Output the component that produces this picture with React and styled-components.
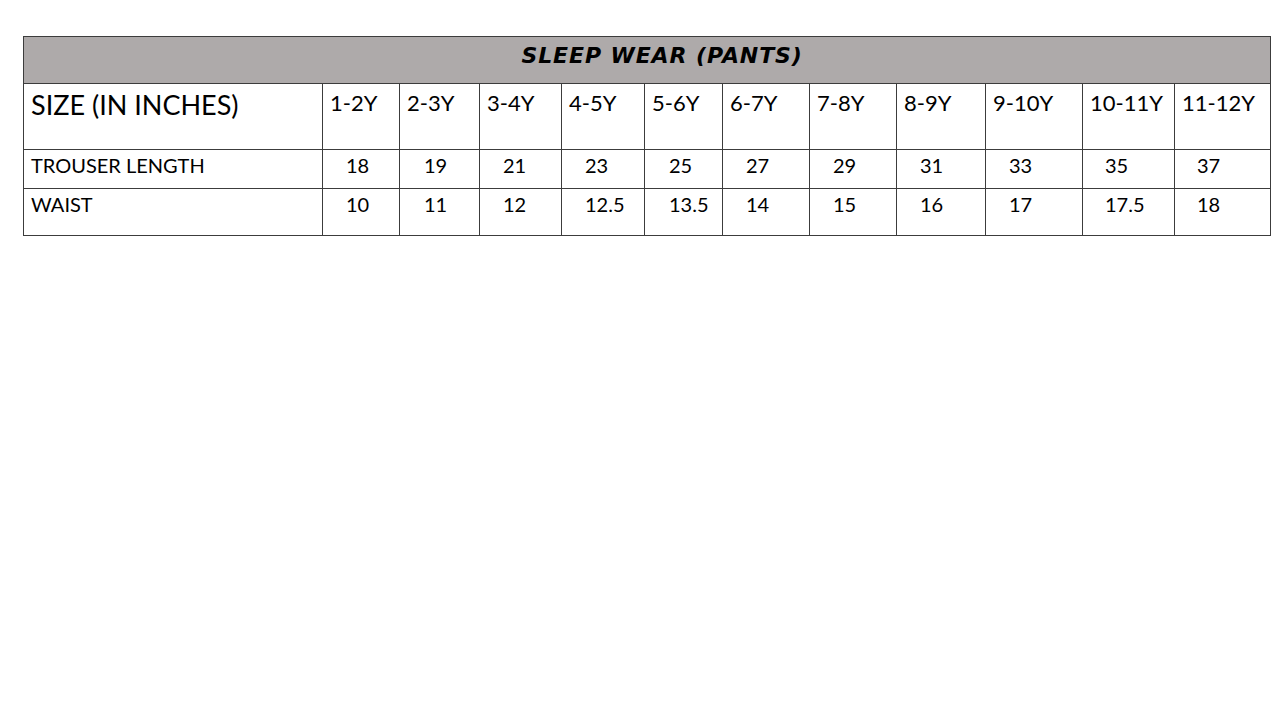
import React from "react";
import styled, { createGlobalStyle } from "styled-components";

const GlobalStyle = createGlobalStyle`
  html, body {
    margin: 0;
    padding: 0;
    background: #ffffff;
  }
  body {
    font-family: Lato, "Liberation Sans", sans-serif;
    color: #000000;
  }
`;

const Page = styled.div`
  width: 1280px;
  height: 720px;
  box-sizing: border-box;
  padding: 36px 0 0 23px;
`;

const Table = styled.table`
  width: 1248px;
  border-collapse: collapse;
  table-layout: fixed;
`;

const TitleCell = styled.th`
  height: 47px;
  padding: 6px 0 0 30px;
  background-color: #aeaaaa;
  border: 1px solid #3c3c3c;
  font-family: "DejaVu Sans", "Liberation Sans", sans-serif;
  font-size: 22px;
  font-weight: bold;
  font-style: italic;
  letter-spacing: 0.9px;
  text-align: center;
  vertical-align: top;
  box-sizing: border-box;
`;

const Row = styled.tr`
  height: ${(p) => p.$h}px;
`;

const LabelCell = styled.td`
  padding: ${(p) => (p.$big ? "4px 0 0 7px" : "3px 0 0 7px")};
  border: 1px solid #3c3c3c;
  font-size: ${(p) => (p.$big ? "27px" : "20px")};
  vertical-align: top;
  text-align: left;
  white-space: nowrap;
`;

const SizeCell = styled.td`
  padding: 5px 0 0 7px;
  border: 1px solid #3c3c3c;
  font-size: 22px;
  vertical-align: top;
  text-align: left;
  white-space: nowrap;
`;

const ValueCell = styled.td`
  padding: 3px 0 0 ${(p) => p.$indent}px;
  border: 1px solid #3c3c3c;
  font-size: 20px;
  vertical-align: top;
  text-align: left;
  white-space: nowrap;
`;

const widths = [299, 77, 80, 82, 83, 78, 87, 87, 89, 97, 92, 96];
const sizes = ["1-2Y", "2-3Y", "3-4Y", "4-5Y", "5-6Y", "6-7Y", "7-8Y", "8-9Y", "9-10Y", "10-11Y", "11-12Y"];
const lengths = ["18", "19", "21", "23", "25", "27", "29", "31", "33", "35", "37"];
const waists = ["10", "11", "12", "12.5", "13.5", "14", "15", "16", "17", "17.5", "18"];
const indents = [23, 24, 23, 23, 24, 23, 23, 23, 23, 22, 22];

const App = () => {
  return (
    <Page>
      <GlobalStyle />
      <Table>
        <colgroup>
          {widths.map((w, i) => (
            <col key={i} style={{ width: w }} />
          ))}
        </colgroup>
        <thead>
          <tr>
            <TitleCell colSpan={12}>SLEEP WEAR (PANTS)</TitleCell>
          </tr>
        </thead>
        <tbody>
          <Row $h={66}>
            <LabelCell $big>SIZE (IN INCHES)</LabelCell>
            {sizes.map((s) => (
              <SizeCell key={s}>{s}</SizeCell>
            ))}
          </Row>
          <Row $h={39}>
            <LabelCell>TROUSER LENGTH</LabelCell>
            {lengths.map((v, i) => (
              <ValueCell key={i} $indent={indents[i]}>{v}</ValueCell>
            ))}
          </Row>
          <Row $h={47}>
            <LabelCell>WAIST</LabelCell>
            {waists.map((v, i) => (
              <ValueCell key={i} $indent={indents[i]}>{v}</ValueCell>
            ))}
          </Row>
        </tbody>
      </Table>
    </Page>
  );
};

export default App;
